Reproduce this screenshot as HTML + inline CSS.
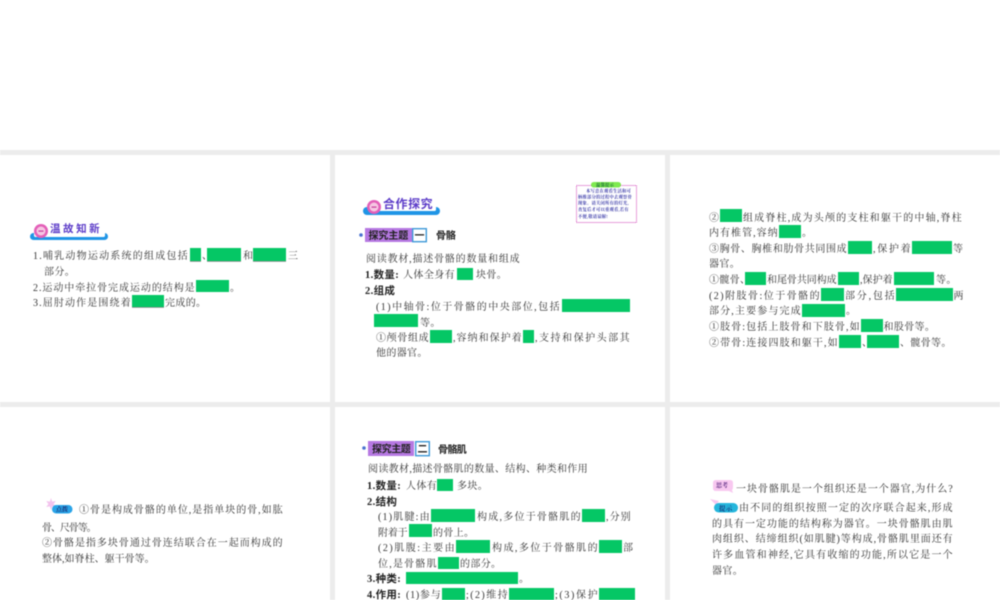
<!DOCTYPE html>
<html lang="zh">
<head>
<meta charset="utf-8">
<style>
html,body{margin:0;padding:0;width:1000px;height:600px;overflow:hidden;background:#fff}
svg{display:block;filter:blur(.42px)}
text{font-family:"Liberation Serif","Noto Serif CJK SC",serif;font-size:10px;fill:#333;letter-spacing:.35px;white-space:pre}
.b{font-family:"Liberation Serif","Noto Sans CJK SC",sans-serif;font-weight:700;font-size:10.5px;fill:#222}
.h{font-family:"Liberation Sans","Noto Sans CJK SC",sans-serif;font-weight:700;fill:#5c3cc8}
.m{font-family:"Liberation Sans","Noto Sans CJK SC",sans-serif;font-weight:700;font-size:10px;fill:#222;letter-spacing:.2px}
.n{font-size:4.3px;fill:#3a3aa8;letter-spacing:.2px;font-weight:700}
.g{fill:#05c765}
</style>
</head>
<body>
<svg width="1000" height="600" viewBox="0 0 1000 600" xmlns="http://www.w3.org/2000/svg">
<rect width="1000" height="600" fill="#fff"/>
<rect x="0" y="150" width="1000" height="5" fill="#ececec"/>
<rect x="0" y="402" width="1000" height="5" fill="#ececec"/>
<rect x="330" y="155" width="5" height="445" fill="#ececec"/>
<rect x="665" y="155" width="5" height="445" fill="#ececec"/>

<!-- Panel 1 -->
<rect x="30" y="233" width="78" height="7" rx="3.5" fill="#1f95e6"/>
<rect x="34" y="226" width="71" height="11" rx="1.5" fill="#fff"/>
<circle cx="41" cy="231" r="7" fill="#e35fb8"/><circle cx="41" cy="231" r="4.5" fill="#f6c6e2"/><rect x="38.5" y="230.5" width="5" height="1.2" fill="#c83c9c"/>
<text class="h" x="50" y="232" textLength="50" style="font-size:10.5px">温故知新</text>
<text x="33" y="259" textLength="155">1.哺乳动物运动系统的组成包括</text>
<rect class="g" x="190" y="248" width="11" height="13"/><rect x="190" y="261" width="11" height=".7" fill="#777"/>
<text x="202" y="259">、</text>
<rect class="g" x="207" y="248" width="34" height="13"/><rect x="207" y="261" width="34" height=".7" fill="#777"/>
<text x="243" y="259">和</text>
<rect class="g" x="253" y="248" width="33" height="13"/><rect x="253" y="261" width="33" height=".7" fill="#777"/>
<text x="288" y="259">三</text>
<text x="44" y="275">部分。</text>
<text x="33" y="291" textLength="162">2.运动中牵拉骨完成运动的结构是</text>
<rect class="g" x="196" y="280" width="33" height="12"/>
<text x="230" y="291">。</text>
<text x="33" y="306" textLength="98">3.屈肘动作是围绕着</text>
<rect class="g" x="132" y="295" width="32" height="12"/><rect x="132" y="307" width="32" height=".7" fill="#777"/>
<text x="165" y="306">完成的。</text>

<!-- Panel 2 -->
<rect x="363" y="207" width="77" height="8" rx="4" fill="#1f95e6"/>
<rect x="368" y="199" width="68" height="12" rx="1.5" fill="#fff"/>
<circle cx="374" cy="207" r="7" fill="#e35fb8"/><circle cx="374" cy="207" r="4.5" fill="#f6c6e2"/><rect x="371.5" y="206.5" width="5" height="1.2" fill="#c83c9c"/>
<text class="h" x="383" y="208" textLength="50" style="font-size:12px">合作探究</text>
<rect x="576.5" y="185.5" width="60" height="37" fill="#fff" stroke="#d040b8" stroke-width="1" stroke-dasharray="1 1"/>
<rect x="591" y="182" width="30" height="5.5" rx="2.7" fill="#7fea50"/>
<text class="n" x="596" y="186.4" style="fill:#1a6a3a">温馨提示</text>
<text class="n" x="586" y="192.5">本写意在观看生活和可</text>
<text class="n" x="578" y="198.5">柄椎部分的过程中去观察骨</text>
<text class="n" x="578" y="204.5">现象。请关闭所有的灯光,</text>
<text class="n" x="578" y="211">查复后才可以重观看,若有</text>
<text class="n" x="578" y="218">不便,敬请谅解!</text>

<circle cx="361" cy="235" r="1.8" fill="#4a72d0"/>
<rect x="365" y="228" width="47" height="14" fill="#b678e2"/>
<text class="m" x="368.5" y="239" textLength="40">探究主题</text>
<rect x="412.7" y="228.7" width="13.6" height="13" fill="#fff" stroke="#3f9ad8" stroke-width="1.4"/>
<text class="m" x="414.5" y="239">一</text>
<text class="m" x="436" y="239" textLength="20">骨骼</text>
<text x="366" y="262" textLength="154">阅读教材,描述骨骼的数量和组成</text>
<text class="b" x="365" y="278">1.数量:</text>
<text x="403" y="278" textLength="52">人体全身有</text>
<rect class="g" x="457" y="268" width="16" height="12"/>
<text x="476" y="278">块骨。</text>
<text class="b" x="365" y="294">2.组成</text>
<text x="376" y="310" textLength="184">(1)中轴骨:位于骨骼的中央部位,包括</text>
<rect class="g" x="562" y="299" width="68" height="13"/>
<rect class="g" x="374" y="314" width="44" height="13"/>
<text x="420" y="326">等。</text>
<text x="376" y="341" textLength="53">①颅骨组成</text>
<rect class="g" x="430" y="330" width="22" height="13"/>
<text x="453" y="341" textLength="69">,容纳和保护着</text>
<rect class="g" x="523" y="330" width="11" height="13"/>
<text x="535" y="341" textLength="95">,支持和保护头部其</text>
<text x="376" y="356">他的器官。</text>

<!-- Panel 3 -->
<text x="709" y="221">②</text>
<rect class="g" x="720" y="209" width="22" height="13"/>
<text x="743" y="221" textLength="219">组成脊柱,成为头颅的支柱和躯干的中轴,脊柱</text>
<text x="709" y="236" textLength="69">内有椎管,容纳</text>
<rect class="g" x="779" y="225" width="22" height="13"/>
<text x="802" y="236">。</text>
<text x="709" y="252" textLength="138">③胸骨、胸椎和肋骨共同围成</text>
<rect class="g" x="848" y="241" width="24" height="13"/>
<text x="873" y="252" textLength="38">,保护着</text>
<rect class="g" x="912" y="241" width="40" height="13"/>
<text x="953" y="252">等</text>
<text x="709" y="267">器官。</text>
<text x="709" y="283">①髋骨、</text>
<rect class="g" x="745" y="272" width="21" height="13"/>
<text x="767" y="283" textLength="70">和尾骨共同构成</text>
<rect class="g" x="838" y="272" width="21" height="13"/>
<text x="860" y="283" textLength="33">,保护着</text>
<rect class="g" x="894" y="272" width="40" height="13"/>
<text x="936" y="283">等。</text>
<text x="709" y="299" textLength="111">(2)附肢骨:位于骨骼的</text>
<rect class="g" x="821" y="288" width="23" height="13"/>
<text x="845" y="299" textLength="50">部分,包括</text>
<rect class="g" x="896" y="288" width="57" height="13"/>
<text x="953.5" y="299">两</text>
<text x="709" y="314" textLength="92">部分,主要参与完成</text>
<rect class="g" x="802" y="304" width="43" height="13"/>
<text x="846" y="314">。</text>
<text x="709" y="330" textLength="151">①肢骨:包括上肢骨和下肢骨,如</text>
<rect class="g" x="861" y="319" width="22" height="13"/>
<text x="883.5" y="330">和股骨等。</text>
<text x="709" y="346" textLength="129">②带骨:连接四肢和躯干,如</text>
<rect class="g" x="839" y="335" width="22" height="13"/>
<text x="862" y="346">、</text>
<rect class="g" x="867" y="335" width="32" height="13"/>
<text x="900" y="346">、髋骨等。</text>

<!-- Panel 4 -->
<path d="M51 498l1.2 3.6 3.6-.6-2.2 3 2.2 3-3.6-.6-1.2 3.6-1.2-3.6-3.6.6 2.2-3-2.2-3 3.6.6z" fill="#f3c4ee"/>
<rect x="52" y="505" width="20.5" height="8.5" rx="4.2" fill="#2aa4e8"/>
<text x="56" y="511.5" style="font-size:6px;fill:#1a2a70;font-weight:700;letter-spacing:0">点拨</text>
<text x="79" y="513" textLength="204">①骨是构成骨骼的单位,是指单块的骨,如肱</text>
<text x="42" y="531" textLength="55">骨、尺骨等。</text>
<text x="42" y="546" textLength="241">②骨骼是指多块骨通过骨连结联合在一起而构成的</text>
<text x="42" y="562" textLength="113">整体,如脊柱、躯干骨等。</text>

<!-- Panel 5 -->
<circle cx="364" cy="448" r="1.8" fill="#4a72d0"/>
<rect x="368" y="441" width="46" height="15" fill="#b678e2"/>
<text class="m" x="372" y="452.5" textLength="39">探究主题</text>
<rect x="415.7" y="441.7" width="13.6" height="14" fill="#fff" stroke="#3f9ad8" stroke-width="1.4"/>
<text class="m" x="417.5" y="452.5">二</text>
<text class="m" x="438" y="453" textLength="29">骨骼肌</text>
<text x="368" y="472" textLength="220">阅读教材,描述骨骼肌的数量、结构、种类和作用</text>
<text class="b" x="367" y="489">1.数量:</text>
<text x="406" y="489">人体有</text>
<rect class="g" x="437" y="479" width="16" height="12"/>
<text x="457" y="489">多块。</text>
<text class="b" x="367" y="505">2.结构</text>
<text x="378" y="520" textLength="52">(1)肌腱:由</text>
<rect class="g" x="431" y="509" width="44" height="13"/>
<text x="477" y="520" textLength="104">构成,多位于骨骼肌的</text>
<rect class="g" x="582" y="509" width="23" height="13"/>
<text x="606" y="520" textLength="25">,分别</text>
<text x="378" y="536" textLength="30">附着于</text>
<rect class="g" x="409" y="524" width="23" height="13"/>
<text x="433" y="536">的骨上。</text>
<text x="378" y="551" textLength="77">(2)肌腹:主要由</text>
<rect class="g" x="456" y="540" width="34" height="13"/>
<text x="492" y="551" textLength="106">构成,多位于骨骼肌的</text>
<rect class="g" x="599" y="540" width="23" height="13"/>
<text x="623" y="551">部</text>
<text x="378" y="567" textLength="59">位,是骨骼肌</text>
<rect class="g" x="438" y="557" width="21" height="12"/>
<text x="460" y="567">的部分。</text>
<text class="b" x="367" y="582">3.种类:</text>
<rect class="g" x="406" y="572" width="112" height="12"/>
<text x="519" y="582">。</text>
<text class="b" x="367" y="598">4.作用:</text>
<text x="406" y="598" textLength="35">(1)参与</text>
<rect class="g" x="442" y="588" width="23" height="12"/>
<text x="466" y="598" textLength="42">;(2)维持</text>
<rect class="g" x="509" y="588" width="45" height="12"/>
<text x="555" y="598" textLength="43">;(3)保护</text>
<rect class="g" x="599" y="588" width="36" height="12"/>

<!-- Panel 6 -->
<path d="M716 480h14q3 0 3 3v4q0 2-1 3l1 3-4-2h-13q-3 0-3-3v-5q0-3 3-3z" fill="#f8c8f0"/>
<text x="716" y="487.5" style="font-size:6px;fill:#5a2a80;font-weight:700;letter-spacing:0">思考</text>
<text x="736" y="492" textLength="217">一块骨骼肌是一个组织还是一个器官,为什么?</text>
<path d="M710 499l9 2-3 4z" fill="#f8c8f0"/>
<rect x="714" y="503" width="24" height="9.5" rx="4.7" fill="#25b6dc"/>
<text x="719" y="510.3" style="font-size:6.5px;fill:#143a80;font-weight:700;letter-spacing:.2px">提示</text>
<text x="739" y="511" textLength="214">由不同的组织按照一定的次序联合起来,形成</text>
<text x="712" y="527" textLength="241">的具有一定功能的结构称为器官。一块骨骼肌由肌</text>
<text x="712" y="542" textLength="241">肉组织、结缔组织(如肌腱)等构成,骨骼肌里面还有</text>
<text x="712" y="558" textLength="241">许多血管和神经,它具有收缩的功能,所以它是一个</text>
<text x="712" y="574">器官。</text>
</svg>
</body>
</html>
